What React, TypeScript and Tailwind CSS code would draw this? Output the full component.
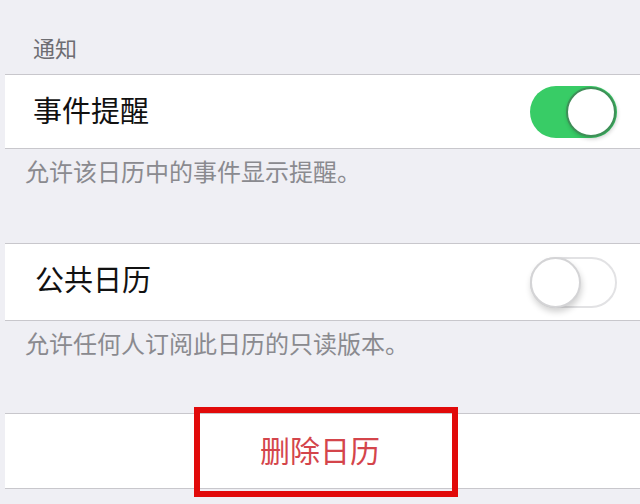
import React from "react";

const font = {
  fontFamily: '"Noto Sans CJK SC", "Noto Sans", sans-serif',
};

const SwitchOn = () => (
  <div className="flex h-[52px] w-[87px] items-center justify-end rounded-full bg-[#38cc66] pr-[1px]">
    <div className="h-[50px] w-[50px] rounded-full border-2 border-[#3f8f58] bg-white shadow-[1px_2px_4px_rgba(0,0,0,0.2)]" />
  </div>
);

const SwitchOff = () => (
  <div className="flex h-[51px] w-[87px] items-center rounded-full border-2 border-[#e2e2e4] bg-white">
    <div className="-ml-[2px] h-[51px] w-[51px] rounded-full border-2 border-[#d4d4d6] bg-white shadow-[1px_4px_6px_rgba(0,0,0,0.18)]" />
  </div>
);

const App = () => {
  return (
    <div
      className="h-[504px] w-[640px] overflow-hidden bg-[#efeff4] pl-[5px]"
      style={font}
    >
      <div className="h-[74px] pl-[28px] pt-[35px] text-[22px] leading-[24px] text-[#6d6d72]">
        通知
      </div>

      <div className="box-border flex h-[75px] items-center justify-between border-y border-[#c8c7cc] bg-white pl-[28px] pr-[23px]">
        <span className="mb-[5px] text-[29px] leading-[32px] text-[#111]">事件提醒</span>
        <SwitchOn />
      </div>

      <div className="h-[94px] pl-[20px] pt-[8px] text-[24px] leading-[28px] text-[#8a8a8f]">
        允许该日历中的事件显示提醒。
      </div>

      <div className="box-border flex h-[78px] items-center justify-between border-y border-[#c8c7cc] bg-white pl-[30px] pr-[23px]">
        <span className="mb-[8px] text-[29px] leading-[32px] text-[#111]">公共日历</span>
        <SwitchOff />
      </div>

      <div className="h-[92px] pl-[20px] pt-[8px] text-[24px] leading-[28px] text-[#8a8a8f]">
        允许任何人订阅此日历的只读版本。
      </div>

      <div className="relative box-border flex h-[76px] items-center justify-center border-y border-[#c8c7cc] bg-white pr-[5px]">
        <span className="mb-[5px] text-[30px] leading-[32px] text-[#d4454b]">删除日历</span>
        <div className="absolute left-[189px] top-[-7px] h-[90px] w-[264px] border-[6px] border-[#e10a0a]" />
      </div>
    </div>
  );
};

export default App;
